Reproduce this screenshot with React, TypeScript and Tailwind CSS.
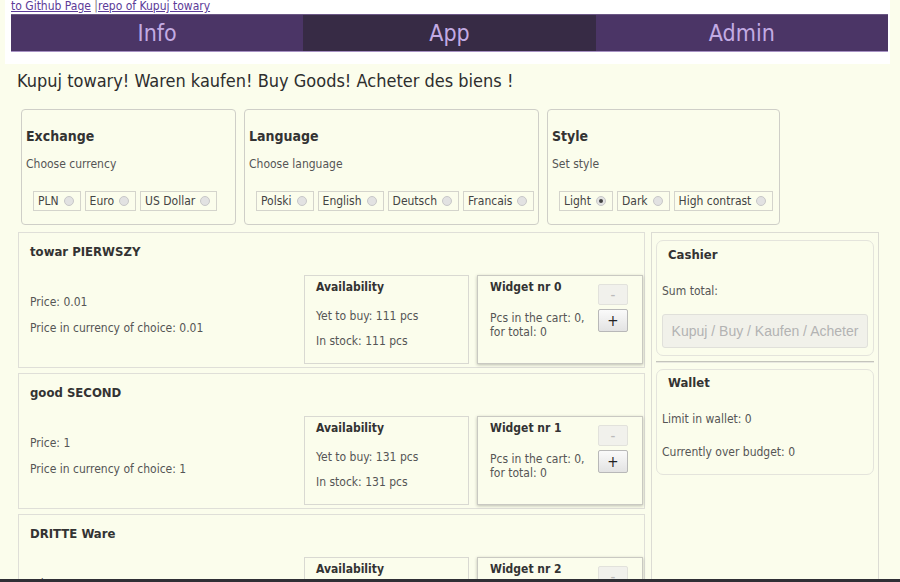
import React from 'react';

interface Good {
    name: string;
    price: string;
    stock: number;
}

const goods: Good[] = [
    {name: 'towar PIERWSZY', price: '0.01', stock: 111},
    {name: 'good SECOND', price: '1', stock: 131},
    {name: 'DRITTE Ware', price: '2', stock: 151},
];

function Radio({label, checked}: { label: string; checked?: boolean }) {
    return (
        <label className="shrink-0 whitespace-nowrap inline-flex items-center h-[20px] border border-[#d4d4cc] pl-[4px] pr-[6px] gap-[5px] text-[12px] text-[#444]">
            <span>{label}</span>
            <span className="w-[10px] h-[10px] rounded-full border border-[#c8c8c8] bg-[#e2e2e2] flex items-center justify-center">
                {checked && <span className="w-[4px] h-[4px] rounded-full bg-[#444]"></span>}
            </span>
        </label>
    );
}

function Setting({title, hint, options, checked, width}: { title: string; hint: string; options: string[]; checked?: number; width: string }) {
    return (
        <div className={"shrink-0 h-[116px] border border-[#cfcfc8] rounded-[4px] " + width}>
            <div className="pl-[4px] pt-[17px] text-[14px] font-bold text-[#333] leading-[18px]">{title}</div>
            <div className="pl-[4px] pt-[11px] text-[12px] text-[#555] leading-[16px]">{hint}</div>
            <div className="pl-[11px] pt-[19px] flex gap-[4px]">
                {options.map((o, i) => <Radio key={o} label={o} checked={i === checked}/>)}
            </div>
        </div>
    );
}

function Btn({children, disabled}: { children: React.ReactNode; disabled?: boolean }) {
    return (
        <div className={"w-[30px] rounded-[2px] border flex items-center justify-center text-[15px] " +
            (disabled ? "h-[21px] border-[#e2e2dc] bg-[#f1f1ec] text-[#bbb]" : "h-[23px] border-[#b8b8b8] bg-gradient-to-b from-[#fafafa] to-[#e3e3e3] text-[#222]")}>
            {children}
        </div>
    );
}

function GoodCard({good, index}: { good: Good; index: number }) {
    return (
        <div className="h-[136px] border border-[#dfdfd8] flex flex-col">
            <div className="pl-[11px] pt-[10px] text-[13px] font-bold text-[#333] leading-[18px]">{good.name}</div>
            <div className="flex items-start mt-[14px] pr-[1px]">
                <div className="flex-1 pl-[11px] pt-[19px] text-[12px] text-[#555] leading-[16px]">
                    <div>Price: {good.price}</div>
                    <div className="mt-[10px]">Price in currency of choice: {good.price}</div>
                </div>
                <div className="w-[165px] h-[89px] border border-[#d9d9d2] px-[11px] pt-[3px] text-[12px] text-[#555] leading-[16px]">
                    <div className="font-bold text-[#333]">Availability</div>
                    <div className="mt-[13px]">Yet to buy: {good.stock} pcs</div>
                    <div className="mt-[9px]">In stock: {good.stock} pcs</div>
                </div>
                <div className="ml-[8px] w-[166px] h-[89px] border border-[#c9c9c2] shadow-[0_1px_3px_rgba(0,0,0,0.25)] pl-[12px] pr-[14px] pt-[3px] flex text-[12px] text-[#555] leading-[14px]">
                    <div className="flex-1">
                        <div className="font-bold text-[#333] leading-[16px]">Widget nr {index}</div>
                        <div className="mt-[16px]">Pcs in the cart: 0,</div>
                        <div>for total: 0</div>
                    </div>
                    <div className="pt-[5px] flex flex-col gap-[4px]">
                        <Btn disabled>-</Btn>
                        <Btn>+</Btn>
                    </div>
                </div>
            </div>
        </div>
    );
}

export default function App() {
    return (
        <div className="min-h-screen bg-[#fbfdec] font-['DejaVu_Sans_Condensed','DejaVu_Sans',sans-serif] text-[#333] overflow-hidden">
            <div className="ml-[5px] w-[885px] bg-white pl-[6px] pb-[12px]">
                <div className="h-[14px] text-[12px] leading-[13px] text-[#5c3b98]">
                    <a className="underline">to Github Page</a> <span className="text-[#777]">|</span><a className="underline">repo of Kupuj towary</a>
                </div>
                <div className="w-[877px] grid grid-cols-3 h-[38px] bg-[#4b3566] border-t border-[#6b5785] border-b border-b-[#a792c4] text-[23px] text-[#c3abe3] leading-[36px] text-center">
                    <div>Info</div>
                    <div className="bg-[#372b45]">App</div>
                    <div>Admin</div>
                </div>
            </div>

            <div className="pl-[17px] pt-[5px] text-[18px] leading-[24px] text-[#2e2e2e]">
                Kupuj towary! Waren kaufen! Buy Goods! Acheter des biens !
            </div>

            <div className="flex gap-[8px] pl-[21px] mt-[16px]">
                <Setting width="w-[215px]" title="Exchange" hint="Choose currency" options={['PLN', 'Euro', 'US Dollar']}/>
                <Setting width="w-[295px]" title="Language" hint="Choose language" options={['Polski', 'English', 'Deutsch', 'Francais']}/>
                <Setting width="w-[233px]" title="Style" hint="Set style" options={['Light', 'Dark', 'High contrast']} checked={0}/>
            </div>

            <div className="flex gap-[6px] pl-[17px] mt-[7px]">
                <div className="w-[628px] flex flex-col gap-[5px] pl-[1px]">
                    {goods.map((g, i) => <GoodCard key={g.name} good={g} index={i}/>)}
                </div>
                <div className="w-[228px] min-h-[400px] border border-[#dcdcd4] px-[4px] pt-[7px]">
                    <div className="h-[116px] border border-[#e4e4dc] rounded-[7px] px-[5px] pt-[6px] text-[12px] text-[#555]">
                        <div className="pl-[6px] text-[13px] font-bold text-[#333] leading-[16px]">Cashier</div>
                        <div className="mt-[20px] leading-[16px]">Sum total:</div>
                        <div className="mt-[15px] h-[34px] border border-[#e0e0da] rounded-[3px] bg-[#f1f1ea] flex items-center justify-center font-['Liberation_Sans',sans-serif] text-[14px] text-[#b3b3b3]">
                            Kupuj / Buy / Kaufen / Acheter
                        </div>
                    </div>
                    <div className="mt-[5px] h-[2px] bg-[#c4c4bc] border-b border-[#e8e8e0]"></div>
                    <div className="mt-[6px] h-[106px] border border-[#e4e4dc] rounded-[7px] px-[5px] pt-[5px] text-[12px] text-[#555]">
                        <div className="pl-[6px] text-[13px] font-bold text-[#333] leading-[16px]">Wallet</div>
                        <div className="mt-[20px] leading-[16px]">Limit in wallet: 0</div>
                        <div className="mt-[17px] leading-[16px]">Currently over budget: 0</div>
                    </div>
                </div>
            </div>
            <div className="fixed left-0 right-0 bottom-0 h-[3px] bg-[#2f2f35]"></div>
        </div>
    );
}
